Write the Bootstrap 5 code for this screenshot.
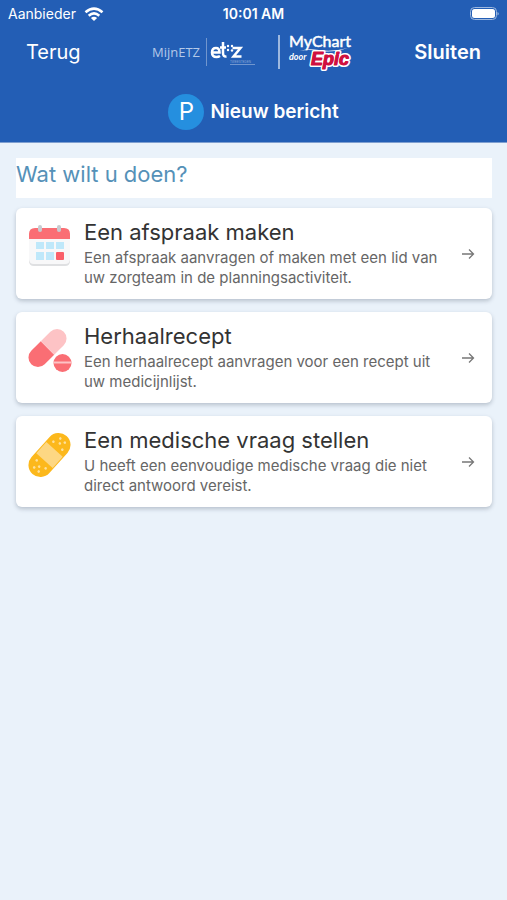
<!DOCTYPE html>
<html lang="nl">
<head>
<meta charset="utf-8">
<meta name="viewport" content="width=device-width, initial-scale=1">
<title>Nieuw bericht</title>
<link href="https://cdn.jsdelivr.net/npm/bootstrap@5.3.0/dist/css/bootstrap.min.css" rel="stylesheet">
<style>
body { font-family: Inter, "Liberation Sans", sans-serif; background: #eaf2fa; }
.app-header { background: #235eb5; border-bottom: 1px solid #7f9fd0; }
.status-bar { height: 28px; font-size: 14px; line-height: 16px; }
.nav-bar { height: 48px; padding: 0 26px; }
.title-bar { height: 66px; padding-top: 6px; gap: 6px; }
.title-text { font-size: 19px; line-height: 24px; }
.side { flex: 1 1 0; }
.nav-action { font-size: 20px; line-height: 24px; }
.avatar { width: 36px; height: 36px; background: #258fdf; font-size: 24px; line-height: 36px; }
.question { font-size: 22px; line-height: 32px; height: 40px; color: #5591b8; }
.content { padding: 15px 15px 24px 16px; }
.choices { gap: 13px; margin-top: 10px; }
.choice { border-radius: 6px; padding: 12px 16px 11px 12px; box-shadow: 0 2px 4px rgba(50, 65, 85, .28); color: #333; }
.choice:hover { color: #333; }
.choice-icon { width: 44px; height: 50px; margin-right: 12px; }
.choice-body { margin-right: 12px; }
.choice-title { font-size: 22px; line-height: 24px; margin-bottom: 4px; }
.choice-text { font-size: 15px; line-height: 20px; color: #666; }
</style>
<script src="https://cdn.jsdelivr.net/npm/bootstrap@5.3.0/dist/js/bootstrap.bundle.min.js" defer></script>
</head>
<body>
<header class="app-header text-white">
  <div class="status-bar d-flex align-items-center ps-2 pe-2">
    <div class="side d-flex align-items-center gap-2">
      <span>Aanbieder</span>
      <svg width="20" height="15" viewBox="0 0 20 15" fill="none" stroke="#fff" stroke-width="2.6" aria-label="Wifi"><path d="M1.500 5.200Q10-2 18.500 5.200M4.700 8.700Q10 4.200 15.300 8.700"/><path d="M10 14 6.900 11Q10 8.500 13.100 11Z" fill="#fff" stroke="none"/></svg>
    </div>
    <span class="fw-semibold">10:01 AM</span>
    <div class="side d-flex justify-content-end">
      <svg width="30" height="14" viewBox="0 0 30 14" aria-label="Batterij"><rect x="1.500" y=".5" width="26" height="12" rx="4" fill="none" stroke="#9db8df"/><rect x="3" y="2" width="23" height="9" rx="2.500" fill="#fff"/><path d="M28.500 5q2.500 1.500 0 3.500z" fill="#9db8df"/></svg>
    </div>
  </div>
  <nav class="nav-bar d-flex align-items-center">
    <div class="side"><a href="#" class="nav-action text-white text-decoration-none">Terug</a></div>
    <svg width="208" height="40" viewBox="0 0 208 40" role="img" aria-label="MijnETZ, MyChart door Epic">
      <text x="2" y="25" font-family="'Open Sans', sans-serif" font-weight="400" font-size="13" fill="#b4c9e8">MijnETZ</text>
      <path d="M56.500 6v28" stroke="#7196ce"/>
      <g fill="none" stroke="#fff" stroke-width="2.500"><path d="M62.500 20.500h7q0-4.500-3.500-4.500-4 0-4 4.500t4.500 4.500q2 0 3.500-1M73 10v11q0 4 3.500 3.500M70 15.500h6M82.500 16h8l-7 8.500h8"/></g>
      <g fill="#fff"><circle cx="78" cy="14" r="1.200"/><circle cx="82" cy="14" r="1.200"/><circle cx="78" cy="18" r="1.200"/><circle cx="82" cy="18.500" r="1.200"/></g>
      <text x="80" y="31" font-family="'Liberation Sans', sans-serif" font-size="3" fill="#8dabd8">TWEESTEDEN</text>
      <path d="M80 32.500h25" stroke="#7196ce"/>
      <path d="M129 3v34" stroke="#c7d7ee" stroke-width="1.500"/>
      <text x="139" y="15" font-family="Lato, sans-serif" font-weight="400" font-size="16" fill="#fff" stroke="#fff" stroke-width=".5">MyChart</text>
      <path d="M150 19q7-3 19-1 14 2 29-2-15 5-29 3-11-2-19 0z" fill="#fff"/>
      <text x="139" y="28" font-family="Lato, sans-serif" font-weight="700" font-style="italic" font-size="9" fill="#fff">door</text>
      <g font-family="'Liberation Sans', sans-serif" font-weight="700" font-style="italic" font-size="18" fill="#d0103f" stroke-linejoin="round">
        <text x="161" y="33" stroke="#fff" stroke-width="4" paint-order="stroke">Epic</text>
        <text x="161" y="33" stroke="#d0103f" stroke-width="1">Epic</text>
      </g>
    </svg>
    <div class="side text-end"><a href="#" class="nav-action fw-semibold text-white text-decoration-none">Sluiten</a></div>
  </nav>
  <div class="title-bar d-flex align-items-center justify-content-center">
    <span class="avatar rounded-circle text-center">P</span>
    <h1 class="title-text m-0 fw-semibold">Nieuw bericht</h1>
  </div>
</header>
<main class="content">
  <h2 class="question bg-white m-0 fw-normal">Wat wilt u doen?</h2>
  <div class="choices d-flex flex-column">
    <a href="#" class="choice bg-white d-flex align-items-center text-decoration-none">
      <svg class="choice-icon flex-shrink-0 align-self-start" viewBox="0 0 44 50" aria-hidden="true">
        <path d="M1 14h41v27q0 5-5 5H6q-5 0-5-5z" fill="#dfe0e2"/><path d="M1 14h41v25q0 5-5 5H6q-5 0-5-5z" fill="#f8f8f9"/><path d="M1 19v-5q0-6 6-6h29q6 0 6 6v5z" fill="#fa6e74"/>
        <g fill="#c8cbd0"><rect x="10" y="5" width="4" height="7" rx="2"/><rect x="29" y="5" width="4" height="7" rx="2"/></g>
        <path d="M8 22h8v7H8zM18 22h8v7h-8zM28 22h8v7h-8zM8 32h8v8H8zM18 32h8v8h-8z" fill="#bfe8fa"/><rect x="28" y="32" width="8" height="8" rx="1" fill="#fa5f69"/>
      </svg>
      <span class="choice-body flex-grow-1">
        <span class="choice-title d-block">Een afspraak maken</span>
        <span class="choice-text d-block">Een afspraak aanvragen of maken met een lid van uw zorgteam in de planningsactiviteit.</span>
      </span>
      <svg class="flex-shrink-0" width="16" height="12" viewBox="0 0 16 12" fill="none" stroke="#777" stroke-width="1.300" aria-hidden="true"><path d="M2 6h11M9 1.500 13.500 6 9 10.500"/></svg>
    </a>
    <a href="#" class="choice bg-white d-flex align-items-center text-decoration-none">
      <svg class="choice-icon flex-shrink-0 align-self-start" viewBox="0 0 44 50" aria-hidden="true">
        <g transform="rotate(-45 19.500 24)"><path d="M19.500 14.500H6a9.500 9.500 0 0 0 0 19h13.500z" fill="#fa6e74"/><path d="M19.500 14.500H33a9.500 9.500 0 0 1 0 19H19.500z" fill="#fdc3c5"/></g>
        <circle cx="34.500" cy="39" r="9" fill="#fa6e74"/><path d="M25 38.500h19" stroke="#fdc3c5" stroke-width="2"/>
      </svg>
      <span class="choice-body flex-grow-1">
        <span class="choice-title d-block">Herhaalrecept</span>
        <span class="choice-text d-block">Een herhaalrecept aanvragen voor een recept uit uw medicijnlijst.</span>
      </span>
      <svg class="flex-shrink-0" width="16" height="12" viewBox="0 0 16 12" fill="none" stroke="#777" stroke-width="1.300" aria-hidden="true"><path d="M2 6h11M9 1.500 13.500 6 9 10.500"/></svg>
    </a>
    <a href="#" class="choice bg-white d-flex align-items-center text-decoration-none">
      <svg class="choice-icon flex-shrink-0 align-self-start" viewBox="0 0 44 50" aria-hidden="true">
        <g transform="rotate(-48 21.500 27)"><rect x="-4" y="15" width="51" height="24" rx="12" fill="#fcb81c"/><path d="M14 16h15v22H14z" fill="#fdd783"/>
        <g fill="#fee09b"><circle cx="2" cy="24" r="1.300"/><circle cx="2" cy="30" r="1.300"/><circle cx="6" cy="27" r="1.300"/><circle cx="9" cy="21" r="1.300"/><circle cx="9" cy="33" r="1.300"/><circle cx="34" cy="21" r="1.300"/><circle cx="34" cy="33" r="1.300"/><circle cx="37" cy="27" r="1.300"/><circle cx="41" cy="24" r="1.300"/><circle cx="41" cy="30" r="1.300"/></g></g>
      </svg>
      <span class="choice-body flex-grow-1">
        <span class="choice-title d-block">Een medische vraag stellen</span>
        <span class="choice-text d-block">U heeft een eenvoudige medische vraag die niet direct antwoord vereist.</span>
      </span>
      <svg class="flex-shrink-0" width="16" height="12" viewBox="0 0 16 12" fill="none" stroke="#777" stroke-width="1.300" aria-hidden="true"><path d="M2 6h11M9 1.500 13.500 6 9 10.500"/></svg>
    </a>
  </div>
</main>
</body>
</html>
